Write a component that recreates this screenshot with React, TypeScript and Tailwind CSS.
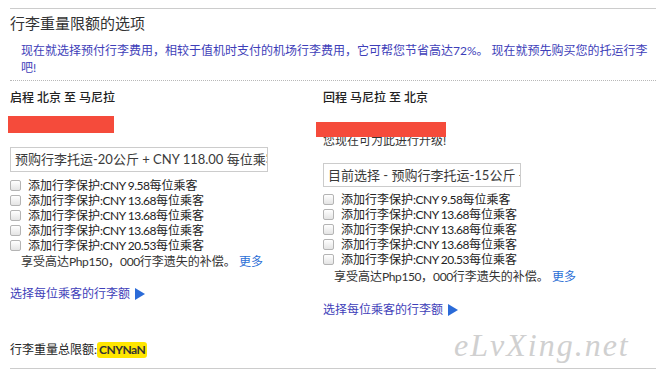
import React from 'react';

const prices = ['9.58', '13.68', '13.68', '13.68', '20.53'];

// 灰色小勾选框
const Box = () => (
  <span className="inline-block w-[11px] h-[11px] shrink-0 rounded-[2px] border border-[#b4b4b4] bg-gradient-to-b from-white to-[#e4e4e4]" />
);

const Arrow = () => (
  <svg width="10" height="12" viewBox="0 0 10 12" className="inline-block ml-[5px] -mt-[2px]">
    <polygon points="0,0 10,6 0,12" fill="#2b6bd8" />
  </svg>
);

const Protections = () => (
  <div>
    {prices.map((p, i) => (
      <div key={i} className="flex items-center gap-[7px] leading-[15px] h-[15px]">
        <Box />
        <span>
          添加行李保护<span className="tracking-[-0.5px]">:CNY {p}</span>每位乘客
        </span>
      </div>
    ))}
  </div>
);

const Compensation = ({ className }: { className: string }) => (
  <div className={`leading-[15px] pl-[11px] text-[#333] ${className}`}>
    享受高达<span className="tracking-[-0.4px]">Php150</span>，<span className="tracking-[-0.4px]">000</span>行李遗失的补偿。 <span className="text-[#2c6fd6]">更多</span>
  </div>
);

const PickLink = ({ className }: { className: string }) => (
  <div className={`leading-4 text-[#3e3eb9] ${className}`}>
    选择每位乘客的行李额<Arrow />
  </div>
);

export default function App() {
  return (
    <div className="relative w-[656px] h-[371px] overflow-hidden bg-white pl-[10px] text-[12px] text-[#222] font-['Lato','Noto_Sans_CJK_SC',sans-serif]">
      <div className="mt-[8px] h-px bg-[#cccccc]" />
      <h2 className="mt-[6px] text-[15px] leading-4 text-[#333]">行李重量限额的选项</h2>
      <p className="mt-[11px] pl-[11px] pr-[6px] leading-[17px] text-[#3e3eb9]">
        现在就选择预付行李费用，相较于值机时支付的机场行李费用，它可帮您节省高达72%。 现在就预先购买您的托运行李吧!
      </p>
      <div className="mt-[4px] border-t border-dotted border-[#b8b8b8]" />

      <div className="flex mt-[9px]">
        {/* 启程 */}
        <div className="w-[313px] shrink-0">
          <div className="leading-4 font-medium">启程 北京 至 马尼拉</div>
          <div className="mt-[10px] -ml-[2px] h-[17px] w-[106px] bg-[#f54b3b]" />
          <div className="mt-[14px] h-[25px] w-[258px] border border-[#cccccc] px-[4px] overflow-hidden whitespace-nowrap text-[13px] leading-[23px] text-[#3a3a3a]">
            预购行李托运-20公斤 + CNY 118.00 每位乘客
          </div>
          <div className="mt-[6px]">
            <Protections />
          </div>
          <Compensation className="mt-[1px]" />
          <PickLink className="mt-[17px]" />
        </div>

        {/* 回程 */}
        <div className="w-[320px] shrink-0">
          <div className="leading-4 font-medium">回程 马尼拉 至 北京</div>
          <div className="relative mt-[11px]">
            <div className="h-4" />
            <div className="leading-4 text-[#333]">您现在可为此进行升级!</div>
            <div className="absolute top-[5px] -left-[7px] h-[15px] w-[130px] bg-[#f54b3b]" />
          </div>
          <div className="mt-[14px] h-[24px] w-[198px] border border-[#cccccc] px-[4px] overflow-hidden whitespace-nowrap text-[13px] leading-[22px] text-[#3a3a3a]">
            目前选择 - 预购行李托运-15公斤 + CNY 88.00 每位乘客
          </div>
          <div className="mt-[5px]">
            <Protections />
          </div>
          <Compensation className="mt-[2px]" />
          <PickLink className="mt-[18px]" />
        </div>
      </div>

      <div className="mt-[24px] leading-4 text-[#222]">
        行李重量总限额:<span className="inline-block h-4 rounded-[3px] bg-[#ffe600] px-[2px] font-bold tracking-[-0.5px] text-[#333]">CNYNaN</span>
      </div>
      <div className="mt-[10px] h-px bg-[#cccccc]" />

      <div className="absolute left-[454px] top-[321px] text-[32px] italic tracking-[2px] text-[#d0d0d0] font-['Liberation_Serif',serif]">
        eLvXing.net
      </div>
    </div>
  );
}
